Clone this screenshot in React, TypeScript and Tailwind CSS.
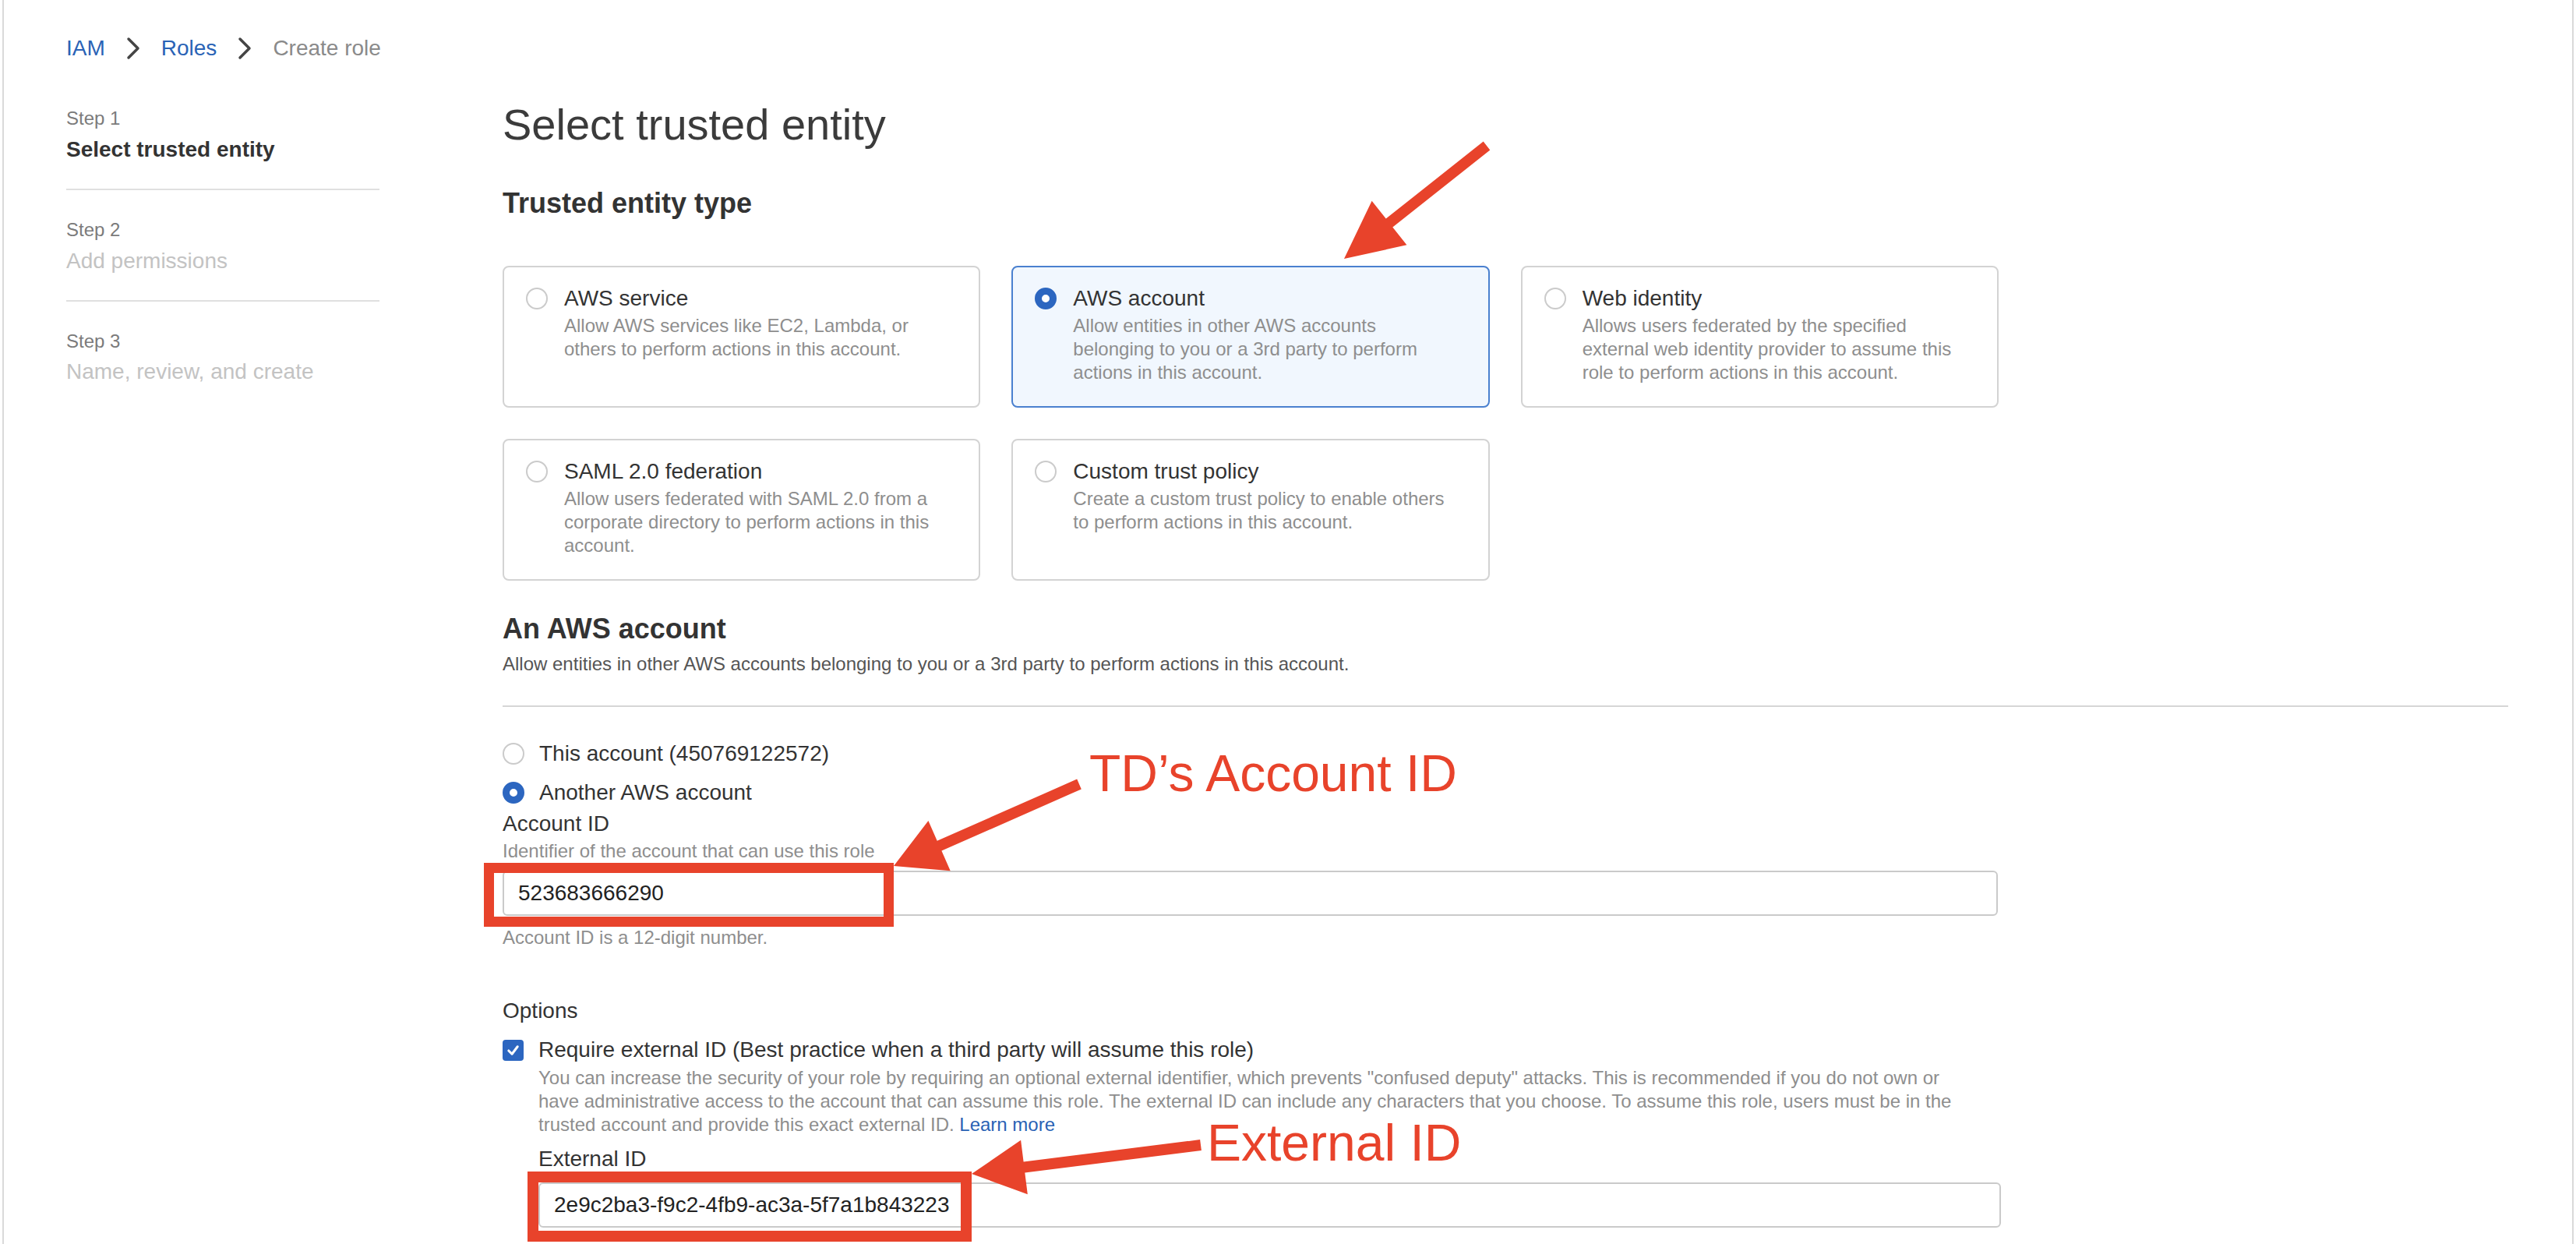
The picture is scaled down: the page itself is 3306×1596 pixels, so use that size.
import React from "react";

const FONT = { fontFamily: '"Liberation Sans", Arial, Helvetica, sans-serif' };

function arrowPoints(
  sx: number,
  sy: number,
  tx: number,
  ty: number,
  shaft = 14,
  headLen = 66,
  headW = 34
) {
  const dx = tx - sx;
  const dy = ty - sy;
  const len = Math.hypot(dx, dy);
  const ux = dx / len;
  const uy = dy / len;
  const nx = -uy;
  const ny = ux;
  const bx = tx - ux * headLen;
  const by = ty - uy * headLen;
  const h = shaft / 2;
  const pts = [
    [sx + nx * h, sy + ny * h],
    [bx + nx * h, by + ny * h],
    [bx + nx * headW, by + ny * headW],
    [tx, ty],
    [bx - nx * headW, by - ny * headW],
    [bx - nx * h, by - ny * h],
    [sx - nx * h, sy - ny * h],
  ];
  return pts.map((p) => p.map((v) => v.toFixed(1)).join(",")).join(" ");
}

function Radio({ checked }: { checked?: boolean }) {
  if (checked) {
    return <span className="block w-[28px] h-[28px] rounded-full border-[9px] border-[#2c66c0] bg-white" />;
  }
  return <span className="block w-[28px] h-[28px] rounded-full border-2 border-[#cbcbcb] bg-white" />;
}

function Chevron() {
  return (
    <svg width="18" height="30" viewBox="0 0 18 30" className="block">
      <polyline points="3,3 15,15 3,27" fill="none" stroke="#454545" strokeWidth="3.5" strokeLinecap="round" strokeLinejoin="round" />
    </svg>
  );
}

function Card({ title, lines, selected }: { title: string; lines: string[]; selected?: boolean }) {
  return (
    <div
      className={
        selected
          ? "h-[182px] rounded-[8px] border-2 border-[#4a80cf] bg-[#f1f7fe] pl-[28px] pr-[16px] pt-[22px] flex gap-[21px]"
          : "h-[182px] rounded-[8px] border-2 border-[#d3d3d3] bg-white pl-[28px] pr-[16px] pt-[22px] flex gap-[21px]"
      }
    >
      <div className="h-[36px] flex items-center shrink-0">
        <Radio checked={selected} />
      </div>
      <div>
        <div className="text-[28px] leading-[36px] text-[#333333]">{title}</div>
        <div className="mt-[2px] text-[24px] leading-[30px] text-[#8e8e8e]">
          {lines.map((l, i) => (
            <div key={i} className="whitespace-nowrap">
              {l}
            </div>
          ))}
        </div>
      </div>
    </div>
  );
}

export default function App() {
  return (
    <div className="relative w-[3306px] h-[1596px] overflow-hidden bg-white" style={FONT}>
      <div className="mx-[3px] h-full border-x-2 border-[#dadada] pl-[80px]">
        {/* Breadcrumb */}
        <div className="pt-[42px] h-[82px] flex items-center gap-[27px] text-[28px] leading-[40px]">
          <span className="text-[#2a63b6]">IAM</span>
          <Chevron />
          <span className="text-[#2a63b6]">Roles</span>
          <Chevron />
          <span className="text-[#8a8a8a]">Create role</span>
        </div>

        <div className="flex">
          {/* Left nav */}
          <div className="w-[402px] shrink-0">
            <div className="mt-[54px] text-[24px] leading-[32px] text-[#7b7b7b]">Step 1</div>
            <div className="mt-[6px] text-[28px] leading-[36px] font-bold text-[#333333]">Select trusted entity</div>
            <div className="mt-[32px] h-[2px] bg-[#e0e0e0]" />
            <div className="mt-[35px] text-[24px] leading-[32px] text-[#7b7b7b]">Step 2</div>
            <div className="mt-[6px] text-[28px] leading-[36px] text-[#c3c3c3]">Add permissions</div>
            <div className="mt-[32px] h-[2px] bg-[#e0e0e0]" />
            <div className="mt-[35px] text-[24px] leading-[32px] text-[#7b7b7b]">Step 3</div>
            <div className="mt-[5px] text-[28px] leading-[36px] text-[#c3c3c3]">Name, review, and create</div>
          </div>

          {/* Main */}
          <div className="ml-[158px] w-[2574px]">
            <h1 className="mt-[46px] text-[56px] leading-[64px] text-[#3b3b3b]">Select trusted entity</h1>
            <h2 className="mt-[47px] text-[36px] leading-[44px] font-bold text-[#333333]">Trusted entity type</h2>

            <div className="mt-[58px] w-[1920px] grid grid-cols-3 gap-x-[40px] gap-y-[40px]">
              <Card title="AWS service" lines={["Allow AWS services like EC2, Lambda, or", "others to perform actions in this account."]} />
              <Card
                selected
                title="AWS account"
                lines={["Allow entities in other AWS accounts", "belonging to you or a 3rd party to perform", "actions in this account."]}
              />
              <Card
                title="Web identity"
                lines={["Allows users federated by the specified", "external web identity provider to assume this", "role to perform actions in this account."]}
              />
              <Card
                title="SAML 2.0 federation"
                lines={["Allow users federated with SAML 2.0 from a", "corporate directory to perform actions in this", "account."]}
              />
              <Card
                title="Custom trust policy"
                lines={["Create a custom trust policy to enable others", "to perform actions in this account."]}
              />
            </div>

            <h2 className="mt-[40px] text-[36px] leading-[44px] font-bold text-[#333333]">An AWS account</h2>
            <p className="mt-[7px] text-[24px] leading-[32px] text-[#555555]">
              Allow entities in other AWS accounts belonging to you or a 3rd party to perform actions in this account.
            </p>
            <div className="mt-[37px] h-[2px] bg-[#d6d6d6]" />

            <div className="mt-[42px] flex items-center gap-[19px] h-[36px]">
              <Radio />
              <span className="text-[28px] leading-[36px] text-[#333333]">This account (450769122572)</span>
            </div>
            <div className="mt-[14px] flex items-center gap-[19px] h-[36px]">
              <Radio checked />
              <span className="text-[28px] leading-[36px] text-[#333333]">Another AWS account</span>
            </div>
            <div className="mt-[4px] text-[28px] leading-[36px] text-[#333333]">Account ID</div>
            <div className="mt-[2px] text-[24px] leading-[30px] text-[#8e8e8e]">Identifier of the account that can use this role</div>
            <div className="mt-[10px] w-[1919px] h-[58px] rounded-[6px] border-2 border-[#cacaca] pl-[18px] flex items-center text-[28px] text-[#222222]">
              523683666290
            </div>
            <div className="mt-[13px] text-[24px] leading-[30px] text-[#8e8e8e]">Account ID is a 12-digit number.</div>

            <div className="mt-[61px] text-[28px] leading-[36px] text-[#333333]">Options</div>
            <div className="mt-[14px] flex items-center gap-[19px] h-[36px]">
              <span className="w-[27px] h-[27px] rounded-[4px] bg-[#2c66c0] flex items-center justify-center">
                <svg width="19" height="19" viewBox="0 0 20 20">
                  <polyline points="4,10.5 8.5,15 16,5" fill="none" stroke="#ffffff" strokeWidth="3.2" strokeLinecap="round" strokeLinejoin="round" />
                </svg>
              </span>
              <span className="text-[28px] leading-[36px] text-[#333333]">
                Require external ID (Best practice when a third party will assume this role)
              </span>
            </div>
            <div className="pl-[46px]">
              <div className="mt-[3px] text-[24px] leading-[30px] text-[#8e8e8e] whitespace-nowrap">
                You can increase the security of your role by requiring an optional external identifier, which prevents "confused deputy" attacks. This is recommended if you do not own or
                <br />
                have administrative access to the account that can assume this role. The external ID can include any characters that you choose. To assume this role, users must be in the
                <br />
                trusted account and provide this exact external ID. <span className="text-[#2962b5]">Learn more</span>
              </div>
              <div className="mt-[11px] text-[28px] leading-[36px] text-[#333333]">External ID</div>
              <div className="mt-[12px] w-[1877px] h-[58px] rounded-[6px] border-2 border-[#cacaca] pl-[18px] flex items-center text-[28px] text-[#222222]">
                2e9c2ba3-f9c2-4fb9-ac3a-5f7a1b843223
              </div>
            </div>
          </div>
        </div>
      </div>

      {/* Annotations overlay */}
      <div className="absolute left-[621px] top-[1107px] w-[526px] h-[82px] border-[13px] border-[#e8432b]" />
      <div className="absolute left-[677px] top-[1503px] w-[570px] h-[90px] border-[14px] border-[#e8432b]" />
      <svg className="absolute left-0 top-0 pointer-events-none" width="3306" height="1596">
        <polygon points={arrowPoints(1908, 187, 1725, 332, 14, 74, 36)} fill="#e8432b" />
        <polygon points={arrowPoints(1385, 1006, 1147, 1111, 14, 64, 35)} fill="#e8432b" />
        <polygon points={arrowPoints(1541, 1469, 1247, 1506, 14, 68, 35)} fill="#e8432b" />
      </svg>
      <div className="absolute left-[1398px] top-[959px] text-[66px] leading-[66px] text-[#e8432b] whitespace-nowrap">
        TD’s Account ID
      </div>
      <div className="absolute left-[1549px] top-[1433px] text-[66px] leading-[66px] text-[#e8432b] whitespace-nowrap">
        External ID
      </div>
    </div>
  );
}
